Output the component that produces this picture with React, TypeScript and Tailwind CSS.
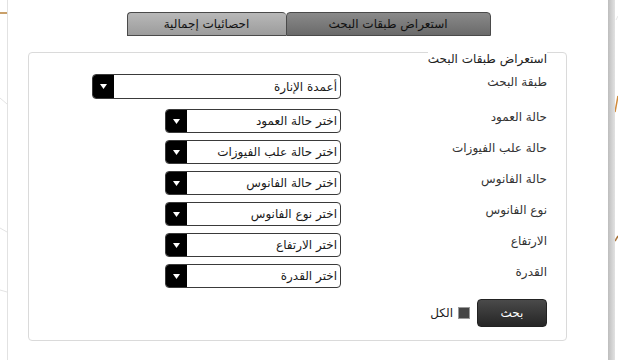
import { useState } from 'react';

const font = { fontFamily: '"DejaVu Sans", "Noto Sans", sans-serif' };

const rows = [
  { label: 'حالة العمود', placeholder: 'اختر حالة العمود' },
  { label: 'حالة علب الفيوزات', placeholder: 'اختر حالة علب الفيوزات' },
  { label: 'حالة الفانوس', placeholder: 'اختر حالة الفانوس' },
  { label: 'نوع الفانوس', placeholder: 'اختر نوع الفانوس' },
  { label: 'الارتفاع', placeholder: 'اختر الارتفاع' },
  { label: 'القدرة', placeholder: 'اختر القدرة' },
];

function Select({ value, wide }: { value: string; wide?: boolean }) {
  return (
    <div
      className={`flex items-stretch border border-[#3a3a3a] rounded-[4px] bg-white overflow-hidden ${
        wide ? 'w-[249px] h-[25px]' : 'w-[176px] h-[24px]'
      }`}
    >
      <div className="flex-1 flex items-center pr-[3px] text-[12px] text-[#1a1a1a] leading-none">{value}</div>
      <div className="w-[21px] bg-black flex items-center justify-center">
        <svg width="7" height="5" viewBox="0 0 7 5">
          <path d="M0 0 L7 0 L3.5 5 Z" fill="#fff" />
        </svg>
      </div>
    </div>
  );
}

export default function App() {
  const [all, setAll] = useState(false);
  const [tab, setTab] = useState(0);

  return (
    <div className="w-[618px] h-[360px] bg-white overflow-hidden flex" style={font}>
      {/* map edge left */}
      <div className="w-[7px] h-full relative">
        <svg width="7" height="360" className="absolute inset-0">
          <rect x="0" y="12" width="7" height="2" fill="#c9a06a" />
          <path d="M0 98 L7 104" stroke="#e4e4e4" strokeWidth="1" />
          <path d="M0 228 L7 232" stroke="#e4e4e4" strokeWidth="1" />
          <path d="M0 290 L7 292" stroke="#e4e4e4" strokeWidth="1" />
        </svg>
      </div>

      {/* dialog */}
      <div className="w-[601px] h-full border-l border-[#e2e2e2] bg-white" dir="rtl">
        {/* tabs */}
        <div className="flex justify-center pt-[12px] pl-[1px]">
          <button
            onClick={() => setTab(0)}
            className="w-[205px] h-[24px] border border-[#4a4a4a] rounded-t-[4px] bg-gradient-to-b from-[#8a8a8a] to-[#6a6a6a] text-[12px] text-[#111] leading-none"
          >
            استعراض طبقات البحث
          </button>
          <button
            onClick={() => setTab(1)}
            className="w-[159px] h-[24px] border border-r-0 border-[#4a4a4a] rounded-t-[4px] bg-gradient-to-b from-[#b8b8b8] to-[#9c9c9c] text-[12px] text-[#111] leading-none"
          >
            احصائيات إجمالية
          </button>
        </div>

        {/* search layers box */}
        <div className="relative mt-[16px] mr-[41px] w-[539px] border border-[#dadada] rounded-[4px] px-[19px] pt-[21px] pb-[13px]">
          <span className="absolute top-[-1px] right-[19px] bg-white pt-[1px] text-[12px] leading-[12px] text-[#222]">
            استعراض طبقات البحث
          </span>

          <div className="flex items-start">
            <div className="w-[206px] pt-[1px] text-[12px] leading-[14px] text-[#333]">طبقة البحث</div>
            <Select value="أعمدة الإنارة" wide />
          </div>

          <div className="flex flex-col gap-[7px] mt-[10px]">
            {rows.map((r) => (
              <div key={r.label} className="flex items-start">
                <div className="w-[206px] pt-[1px] text-[12px] leading-[14px] text-[#333]">{r.label}</div>
                <Select value={r.placeholder} />
              </div>
            ))}
          </div>

          <div className="flex items-center mt-[11px]">
            <button className="w-[70px] h-[28px] rounded-[4px] border border-[#222] bg-gradient-to-b from-[#4a4a4a] to-[#262626] text-white text-[12px] leading-none">
              بحث
            </button>
            <button
              onClick={() => setAll(!all)}
              className="mr-[7px] w-[12px] h-[12px] border border-[#9a9a9a] bg-[#454545]"
            />
            <span className="mr-[5px] text-[12px] text-[#222] leading-none">الكل</span>
          </div>
        </div>
      </div>

      {/* dialog shadow edge */}
      <div className="w-[7px] h-full bg-gradient-to-r from-[#bdbdbd] via-[#d0d0d0] to-[#e2e2e2]" />

      {/* map edge right */}
      <div className="flex-1 h-full relative">
        <svg width="3" height="360" className="absolute inset-0">
          <path d="M0 112 L3 96" stroke="#d08a3a" strokeWidth="1.5" />
          <path d="M0 241 L3 236" stroke="#a87238" strokeWidth="1.5" />
          <path d="M1 20 L3 16" stroke="#e6e6e6" strokeWidth="1" />
        </svg>
      </div>
    </div>
  );
}
